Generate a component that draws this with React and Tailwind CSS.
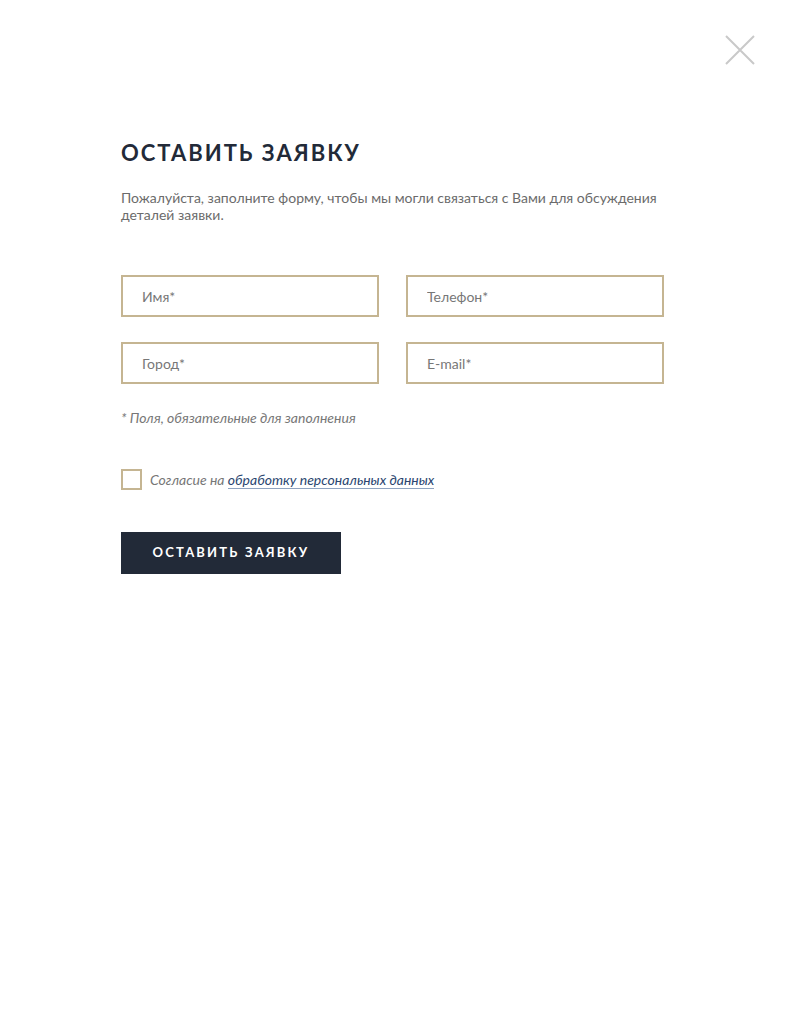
import React from "react";

const Field = ({ placeholder }) => (
  <input
    type="text"
    placeholder={placeholder}
    className="w-[258px] h-[42px] border-2 border-[#c5b592] bg-white px-[19px] text-[14px] text-[#333] placeholder:text-[#777] outline-none"
  />
);

const App = () => {
  return (
    <div className="relative min-h-[1022px] bg-white font-['Lato','Noto_Sans',sans-serif]">
      {/* Close */}
      <button className="absolute left-[724px] top-[34px] w-[32px] h-[32px]" title="Закрыть">
        <svg width="32" height="32" viewBox="0 0 32 32">
          <path d="M2 2 L30 30 M30 2 L2 30" stroke="#c9c9c9" strokeWidth="2" fill="none" />
        </svg>
      </button>

      <div className="pl-[121px] pt-[139px] w-[680px]">
        <h1 className="text-[22px] leading-[28px] font-bold tracking-[2px] text-[#222a38]">
          ОСТАВИТЬ ЗАЯВКУ
        </h1>
        <p className="mt-[22px] text-[14px] leading-[17px] text-[#6b6b6b]">
          Пожалуйста, заполните форму, чтобы мы могли связаться с Вами для обсуждения деталей заявки.
        </p>

        <div className="mt-[52px] grid grid-cols-[258px_258px] gap-x-[27px] gap-y-[25px]">
          <Field placeholder="Имя*" />
          <Field placeholder="Телефон*" />
          <Field placeholder="Город*" />
          <Field placeholder="E-mail*" />
        </div>

        <p className="mt-[25px] text-[14px] leading-[17px] italic text-[#777]">
          * Поля, обязательные для заполнения
        </p>

        <label className="mt-[43px] flex items-center gap-[8px]">
          <span className="w-[21px] h-[21px] border-2 border-[#c5b592] bg-white shrink-0"></span>
          <span className="text-[14px] leading-[17px] italic text-[#777]">
            Согласие на{" "}
            <a href="#" className="text-[#2b4670] border-b border-[#8fa3c0]">
              обработку персональных данных
            </a>
          </span>
        </label>

        <button className="mt-[42px] w-[220px] h-[42px] bg-[#222a38] text-white text-[13px] font-bold tracking-[2.2px]">
          ОСТАВИТЬ ЗАЯВКУ
        </button>
      </div>
    </div>
  );
};

export default App;
